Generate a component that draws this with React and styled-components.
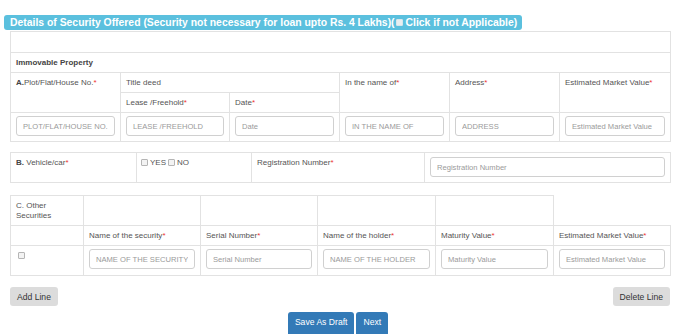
import React from "react";
import styled, { createGlobalStyle } from "styled-components";

const GlobalStyle = createGlobalStyle`
  html, body {
    margin: 0;
    padding: 0;
    background: #fff;
    font-family: "Liberation Sans", Arial, sans-serif;
    color: #555;
  }
  * { box-sizing: border-box; }
`;

const Page = styled.div`
  padding: 15px 8px 0 10px;
  width: 678px;
  height: 334px;
  overflow: hidden;
`;

const Heading = styled.div`
  display: flex;
  align-items: center;
  width: fit-content;
  margin-left: -6px;
  height: 15px;
  padding: 0 5px 0 6px;
  background: #5bc0de;
  border-radius: 3px;
  color: #fff;
  font-weight: bold;
  font-size: 10.4px;
  white-space: pre;
`;

const Box = styled.span`
  display: inline-block;
  width: 7px;
  height: 7px;
  margin: 0 ${(p) => p.$gap || 2}px 0 ${(p) => p.$left || 0}px;
  border: 1px solid ${(p) => (p.$light ? "#d6e6ec" : "#b5b5b5")};
  border-radius: 1px;
  background: ${(p) => (p.$light ? "#e8eef0" : "#f3f3f3")};
  vertical-align: -1px;
`;

const Table = styled.table`
  width: 660px;
  table-layout: fixed;
  border-collapse: collapse;
  margin-top: ${(p) => p.$top || 0}px;
`;

const Cell = styled.td`
  border: 1px solid #e2e2e2;
  padding: ${(p) => (p.$pad ? "3px 5px 4px" : "5px 5px 4px")};
  height: ${(p) => (p.$h ? p.$h + "px" : "20px")};
  font-size: 8px;
  line-height: 10px;
  vertical-align: top;
  color: #555;
`;

const Strong = styled.b`
  font-weight: bold;
  color: #444;
`;

const Req = styled.span`
  color: #e33;
`;

const Input = styled.input`
  display: block;
  width: 100%;
  height: 20px;
  padding: 0 6px;
  border: 1px solid #d0d0d0;
  border-radius: 3px;
  font-family: "Liberation Sans", Arial, sans-serif;
  font-size: 7.6px;
  color: #555;
  background: #fff;
  &::placeholder {
    color: #9a9a9a;
  }
`;

const Choice = styled.span`
  display: inline-block;
  margin-left: -1px;
  white-space: nowrap;
`;

const Actions = styled.div`
  display: flex;
  justify-content: space-between;
  width: 660px;
  margin-top: 11px;
`;

const Button = styled.button`
  display: block;
  border: none;
  border-radius: 3px;
  padding: 0 7px;
  font-family: "Liberation Sans", Arial, sans-serif;
  font-size: 8.6px;
  background: ${(p) => (p.$primary ? "#337ab7" : "#dcdcdc")};
  color: ${(p) => (p.$primary ? "#fff" : "#333")};
  height: ${(p) => (p.$primary ? 24 : 19)}px;
  padding-bottom: ${(p) => (p.$primary ? 4 : 0)}px;
`;

const Submit = styled.div`
  display: flex;
  justify-content: center;
  gap: 2px;
  margin-top: 6px;
  padding-right: 4px;
`;

const Label = ({ children, req }) => (
  <>
    {children}
    {req && <Req>*</Req>}
  </>
);

export default function App() {
  return (
    <Page>
      <GlobalStyle />
      <Heading>
        {"Details of Security Offered (Security not necessary for loan upto Rs. 4 Lakhs)("}
        <Box $light $left={1} $gap={3} />
        {"Click if not Applicable)"}
      </Heading>

      <Table $top={1}>
        <colgroup>
          {[110, 109, 110, 110, 110, 111].map((w, i) => (
            <col key={i} style={{ width: w }} />
          ))}
        </colgroup>
        <tbody>
          <tr>
            <Cell colSpan={6} $h={21} />
          </tr>
          <tr>
            <Cell colSpan={6}>
              <Strong>Immovable Property</Strong>
            </Cell>
          </tr>
          <tr>
            <Cell rowSpan={2}>
              <Strong>A.</Strong>
              <Label req>Plot/Flat/House No.</Label>
            </Cell>
            <Cell colSpan={2}>Title deed</Cell>
            <Cell rowSpan={2}>
              <Label req>In the name of</Label>
            </Cell>
            <Cell rowSpan={2}>
              <Label req>Address</Label>
            </Cell>
            <Cell rowSpan={2}>
              <Label req>Estimated Market Value</Label>
            </Cell>
          </tr>
          <tr>
            <Cell>
              <Label req>Lease /Freehold</Label>
            </Cell>
            <Cell>
              <Label req>Date</Label>
            </Cell>
          </tr>
          <tr>
            <Cell $pad $h={29}>
              <Input placeholder="PLOT/FLAT/HOUSE NO." />
            </Cell>
            <Cell $pad>
              <Input placeholder="LEASE /FREEHOLD" />
            </Cell>
            <Cell $pad>
              <Input placeholder="Date" />
            </Cell>
            <Cell $pad>
              <Input placeholder="IN THE NAME OF" />
            </Cell>
            <Cell $pad>
              <Input placeholder="ADDRESS" />
            </Cell>
            <Cell $pad>
              <Input placeholder="Estimated Market Value" />
            </Cell>
          </tr>
        </tbody>
      </Table>

      <Table $top={10}>
        <colgroup>
          {[126, 115, 173, 246].map((w, i) => (
            <col key={i} style={{ width: w }} />
          ))}
        </colgroup>
        <tbody>
          <tr>
            <Cell $h={30}>
              <Strong>B.</Strong> <Label req>Vehicle/car</Label>
            </Cell>
            <Cell>
              <Choice>
                <Box $gap={2} />YES<Box $left={2} $gap={2} />NO
              </Choice>
            </Cell>
            <Cell>
              <Label req>Registration Number</Label>
            </Cell>
            <Cell $pad style={{ paddingTop: 4 }}>
              <Input placeholder="Registration Number" />
            </Cell>
          </tr>
        </tbody>
      </Table>

      <Table $top={12}>
        <colgroup>
          {[73, 117, 117, 118, 118, 117].map((w, i) => (
            <col key={i} style={{ width: w }} />
          ))}
        </colgroup>
        <tbody>
          <tr>
            <Cell $h={30}>C. Other Securities</Cell>
            <Cell />
            <Cell />
            <Cell />
            <Cell />
          </tr>
          <tr>
            <Cell />
            <Cell>
              <Label req>Name of the security</Label>
            </Cell>
            <Cell>
              <Label req>Serial Number</Label>
            </Cell>
            <Cell>
              <Label req>Name of the holder</Label>
            </Cell>
            <Cell>
              <Label req>Maturity Value</Label>
            </Cell>
            <Cell>
              <Label req>Estimated Market Value</Label>
            </Cell>
          </tr>
          <tr>
            <Cell $pad $h={30}>
              <Box $left={2} style={{ marginTop: 3 }} />
            </Cell>
            <Cell $pad>
              <Input placeholder="NAME OF THE SECURITY" />
            </Cell>
            <Cell $pad>
              <Input placeholder="Serial Number" />
            </Cell>
            <Cell $pad>
              <Input placeholder="NAME OF THE HOLDER" />
            </Cell>
            <Cell $pad>
              <Input placeholder="Maturity Value" />
            </Cell>
            <Cell $pad>
              <Input placeholder="Estimated Market Value" />
            </Cell>
          </tr>
        </tbody>
      </Table>

      <Actions>
        <Button>Add Line</Button>
        <Button>Delete Line</Button>
      </Actions>

      <Submit>
        <Button $primary>Save As Draft</Button>
        <Button $primary>Next</Button>
      </Submit>
    </Page>
  );
}
